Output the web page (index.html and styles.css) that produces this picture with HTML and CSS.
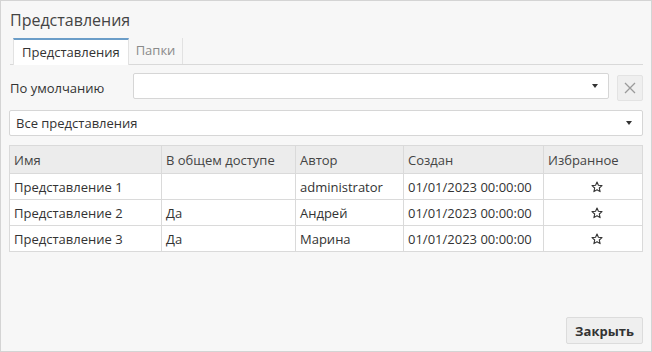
FILE: index.html
```html
<!DOCTYPE html>
<html lang="ru">
<head>
    <meta charset="UTF-8">
    <title>Представления</title>
    <link rel="stylesheet" href="styles.css">
</head>
<body>
    <div class="dialog">
        <h1 class="dialog-title">Представления</h1>

        <!-- tabs -->
        <div class="tabs">
            <span class="tab active">Представления</span>
            <span class="tab">Папки</span>
        </div>

        <div class="default-row">
            <label class="default-label">По умолчанию</label>
            <div class="select default-select"><span></span><span class="caret"></span></div>
            <button class="clear-btn" type="button">
                <svg width="12" height="12" viewBox="0 0 12 12"><path d="M1 1L11 11M11 1L1 11" stroke="#9a9a9a" stroke-width="1.3"/></svg>
            </button>
        </div>

        <div class="select filter-select"><span>Все представления</span><span class="caret"></span></div>

        <table class="views">
            <thead>
                <tr>
                    <th class="c-name">Имя</th>
                    <th class="c-shared">В общем доступе</th>
                    <th class="c-author">Автор</th>
                    <th class="c-date">Создан</th>
                    <th class="c-fav">Избранное</th>
                </tr>
            </thead>
            <tbody>
                <tr>
                    <td>Представление 1</td>
                    <td></td>
                    <td>administrator</td>
                    <td>01/01/2023 00:00:00</td>
                    <td class="fav"><svg class="star" width="12" height="12" viewBox="0 0 12 12"><path d="M6 1L7.4 4.3L11 4.6L8.3 7L9.1 10.6L6 8.7L2.9 10.6L3.7 7L1 4.6L4.6 4.3Z" fill="none" stroke="#333" stroke-width="1.1" stroke-linejoin="round"/></svg></td>
                </tr>
                <tr>
                    <td>Представление 2</td>
                    <td>Да</td>
                    <td>Андрей</td>
                    <td>01/01/2023 00:00:00</td>
                    <td class="fav"><svg class="star" width="12" height="12" viewBox="0 0 12 12"><path d="M6 1L7.4 4.3L11 4.6L8.3 7L9.1 10.6L6 8.7L2.9 10.6L3.7 7L1 4.6L4.6 4.3Z" fill="none" stroke="#333" stroke-width="1.1" stroke-linejoin="round"/></svg></td>
                </tr>
                <tr>
                    <td>Представление 3</td>
                    <td>Да</td>
                    <td>Марина</td>
                    <td>01/01/2023 00:00:00</td>
                    <td class="fav"><svg class="star" width="12" height="12" viewBox="0 0 12 12"><path d="M6 1L7.4 4.3L11 4.6L8.3 7L9.1 10.6L6 8.7L2.9 10.6L3.7 7L1 4.6L4.6 4.3Z" fill="none" stroke="#333" stroke-width="1.1" stroke-linejoin="round"/></svg></td>
                </tr>
            </tbody>
        </table>

        <div class="footer">
            <button class="close-btn" type="button">Закрыть</button>
        </div>
    </div>
</body>
</html>
```

FILE: styles.css
```css
/* Global */
body {
    margin: 0;
    font-family: 'Open Sans', 'Noto Sans', sans-serif;
    font-size: 13px;
    color: #333;
    background: #f7f7f7;
}

.dialog {
    width: 652px;
    height: 352px;
    border: 1px solid #d4d4d4;
    background: #f7f7f7;
    padding: 0 8px;
    box-sizing: border-box;
    display: flex;
    flex-direction: column;
}

.dialog-title {
    margin: 8px 0 0 1px;
    font-size: 16px;
    font-weight: normal;
    color: #444;
    height: 29px;
    line-height: 22px;
}

/* Tabs */
.tabs {
    display: flex;
    margin-left: 1px;
    border-bottom: 1px solid #d9d9d9;
    height: 26px;
    padding-left: 3px;
}

.tab {
    padding: 0 7px 0 7px;
    line-height: 24px;
    color: #8a8a8a;
    border-right: 1px solid #e2e2e2;
}

.tab.active {
    background: #fff;
    color: #333;
    border-top: 2px solid #6b9dc8;
    border-left: 1px solid #e2e2e2;
    padding: 0 8px;
    margin-bottom: -1px;
}

/* Selects */
.default-row {
    display: flex;
    align-items: center;
    margin-top: 8px;
    height: 26px;
}

.default-label {
    width: 124px;
    margin-left: 1px;
    padding-top: 3px;
}

.select {
    display: flex;
    align-items: center;
    justify-content: space-between;
    height: 26px;
    box-sizing: border-box;
    background: #fff;
    border: 1px solid #d6d6d6;
    border-radius: 2px;
    padding: 0 10px 0 6px;
}

.default-select {
    width: 476px;
    flex-shrink: 0;
}

.caret {
    width: 0;
    height: 0;
    border-left: 3px solid transparent;
    border-right: 3px solid transparent;
    border-top: 4px solid #333;
}

.clear-btn {
    width: 26px;
    height: 26px;
    margin-left: 8px;
    margin-top: 3px;
    background: #efefef;
    border: 1px solid #e3e3e3;
    border-radius: 2px;
    padding: 0;
    display: flex;
    align-items: center;
    justify-content: center;
    flex-shrink: 0;
}

.filter-select {
    margin-top: 11px;
    width: 634px;
}

/* Table */
.views {
    margin-top: 9px;
    width: 634px;
    border-collapse: collapse;
    background: #fff;
}

.views th,
.views td {
    border: 1px solid #dadada;
    text-align: left;
    font-weight: normal;
    padding: 0 4px;
    height: 24px;
    line-height: 18px;
    vertical-align: middle;
    white-space: nowrap;
}

.views th {
    background: #ececec;
    height: 27px;
    color: #444;
}

.c-name { width: 143px; }
.c-shared { width: 125px; }
.c-author { width: 99px; }
.c-date { width: 131px; }

.views td.fav {
    text-align: center;
    line-height: 0;
    padding: 1px 0 0 7px;
}

.star {
    display: inline-block;
}

/* Footer */
.footer {
    margin-top: auto;
    margin-bottom: 7px;
    display: flex;
    justify-content: flex-end;
}

.close-btn {
    font-family: 'Open Sans', 'Noto Sans', sans-serif;
    font-size: 13px;
    font-weight: bold;
    color: #333;
    background: #efefef;
    border: 1px solid #dcdcdc;
    border-radius: 2px;
    width: 77px;
    height: 27px;
    padding: 0;
}
```
